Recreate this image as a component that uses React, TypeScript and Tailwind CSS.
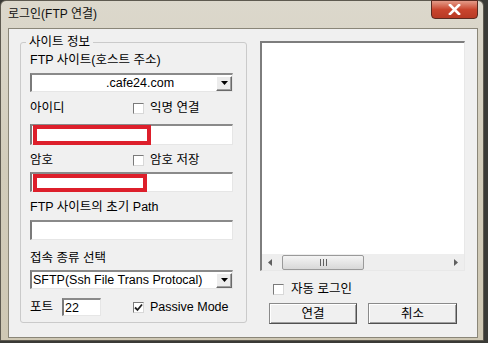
import React from "react";

const font = { fontFamily: '"Liberation Sans", "Noto Sans CJK KR", sans-serif' };

function Check({ checked = false }: { checked?: boolean }) {
  return (
    <span className="w-[11px] h-[11px] bg-white border border-t-[#7a7a7a] border-l-[#7a7a7a] border-r-[#d8d8d8] border-b-[#d8d8d8] flex items-center justify-center shrink-0">
      {checked && (
        <svg width="9" height="9" viewBox="0 0 9 9">
          <path d="M1 4.5 L3.5 7 L8 1.5" stroke="#202020" strokeWidth="1.8" fill="none" />
        </svg>
      )}
    </span>
  );
}

function DropBtn() {
  return (
    <span className="w-[16px] h-[15px] bg-[#ececec] border border-t-white border-l-white border-r-[#6a6a6a] border-b-[#6a6a6a] shadow-[inset_-1px_-1px_0_#a0a0a0] flex items-center justify-center shrink-0">
      <svg width="7" height="4" viewBox="0 0 7 4">
        <path d="M0 0 H7 L3.5 4 Z" fill="#000" />
      </svg>
    </span>
  );
}

const sunken =
  "bg-white border-t-2 border-l-2 border-b border-r border-t-[#8a8a8a] border-l-[#7a7a7a] border-b-[#e6e6e6] border-r-[#e6e6e6]";

export default function App() {
  return (
    <div
      className="w-[488px] h-[343px] overflow-hidden flex bg-[#3a3a36] text-[12.5px] text-black"
      style={font}
    >
      <div className="w-[484px] h-[341px] flex flex-col bg-gradient-to-b from-[#dcd8cc] via-[#d2ccba] to-[#cfc8b4] border border-[#5e5a50] rounded-t-[6px]">
        {/* title bar */}
        <div className="h-[27px] flex items-start relative">
          <span className="pl-[7px] pt-[6px] text-[12px] text-[#101010] leading-[14px]">로그인(FTP 연결)</span>
          <div className="absolute left-[430px] top-[-1px] w-[47px] h-[19px] rounded-b-[4px] border border-[#5a2a20] bg-gradient-to-b from-[#e39a88] via-[#c9452e] to-[#b83a24] flex items-center justify-center">
            <svg width="13" height="11" viewBox="0 0 13 11">
              <path d="M2 1 L11 10 M11 1 L2 10" stroke="#fff" strokeWidth="2.6" strokeLinecap="square" />
            </svg>
          </div>
        </div>
        {/* client */}
        <div className="ml-[7px] w-[470px] h-[310px] bg-[#f0f0f0] border border-[#8a8678] flex">
          {/* group box */}
          <div className="ml-[11px] mt-[13px] w-[227px] h-[281px] border border-[#cacaca] rounded-[3px] relative flex flex-col pl-[9px]">
            <span className="absolute left-[5px] top-[-8px] px-[3px] bg-[#f0f0f0] leading-[14px]">사이트 정보</span>
            <div className="mt-[10px] h-[14px] leading-[14px]">FTP 사이트(호스트 주소)</div>
            <div className={`mt-[6px] w-[203px] h-[19px] flex items-center justify-between ${sunken}`}>
              <span className="pl-[74px] leading-[14px]">.cafe24.com</span>
              <DropBtn />
            </div>
            <div className="mt-[9px] h-[14px] flex items-center w-[203px]">
              <span className="w-[103px]">아이디</span>
              <Check />
              <span className="ml-[6px]">익명 연결</span>
            </div>
            <div className={`mt-[9px] w-[203px] h-[21px] flex items-center ${sunken}`}>
              <div className="ml-[1px] w-[118px] h-[20px] border-[4px] border-[#dd1f2b] bg-white" />
            </div>
            <div className="mt-[8px] h-[14px] flex items-center w-[203px]">
              <span className="w-[103px]">암호</span>
              <Check />
              <span className="ml-[6px]">암호 저장</span>
            </div>
            <div className={`mt-[5px] w-[203px] h-[20px] flex items-center ${sunken}`}>
              <div className="ml-[1px] w-[114px] h-[18px] border-[4px] border-[#dd1f2b] bg-white" />
            </div>
            <div className="mt-[8px] h-[14px] leading-[14px]">FTP 사이트의 초기 Path</div>
            <div className={`mt-[6px] w-[203px] h-[20px] ${sunken}`} />
            <div className="mt-[11px] h-[14px] leading-[14px]">접속 종류 선택</div>
            <div className={`mt-[5px] w-[203px] h-[19px] flex items-center justify-between ${sunken}`}>
              <span className="pl-[1px] leading-[14px] whitespace-nowrap">SFTP(Ssh File Trans Protocal)</span>
              <DropBtn />
            </div>
            <div className="mt-[9px] h-[18px] flex items-center">
              <span className="w-[32px]">포트</span>
              <div className={`w-[39px] h-[18px] flex items-center ${sunken}`}>
                <span className="pl-[1px] leading-[14px]">22</span>
              </div>
              <span className="ml-[32px]">
                <Check checked />
              </span>
              <span className="ml-[6px]">Passive Mode</span>
            </div>
          </div>
          {/* right column */}
          <div className="ml-[13px] mt-[12px] flex flex-col">
            <div className="w-[205px] h-[230px] border-t-2 border-l-2 border-r border-b border-t-[#7d7d7d] border-l-[#7d7d7d] border-r-[#e8e8e8] border-b-[#e8e8e8] bg-white flex flex-col justify-end">
              <div className="h-[16px] bg-[#eeeeee] flex items-center">
                <span className="w-[16px] flex justify-center">
                  <svg width="4" height="7" viewBox="0 0 4 7"><path d="M4 0 V7 L0 3.5 Z" fill="#606060" /></svg>
                </span>
                <div className="ml-[4px] w-[82px] h-[15px] rounded-[2px] border border-[#9a9a9a] bg-gradient-to-b from-[#f4f4f4] to-[#d8d8d8] flex items-center justify-center">
                  <svg width="7" height="7" viewBox="0 0 7 7">
                    <path d="M0.5 0 V7 M3.5 0 V7 M6.5 0 V7" stroke="#606060" strokeWidth="1" />
                  </svg>
                </div>
                <span className="ml-auto w-[16px] flex justify-center">
                  <svg width="4" height="7" viewBox="0 0 4 7"><path d="M0 0 V7 L4 3.5 Z" fill="#606060" /></svg>
                </span>
              </div>
            </div>
            <div className="mt-[12px] ml-[13px] flex items-center h-[12px]">
              <Check />
              <span className="ml-[7px]">자동 로그인</span>
            </div>
            <div className="mt-[8px] ml-[9px] flex gap-[11px]">
              <button className="w-[88px] h-[21px] bg-[#f0f0f0] border border-t-[#8a8a8a] border-l-[#8a8a8a] border-r-[#505050] border-b-[#505050] shadow-[inset_1px_1px_0_#ffffff,inset_-1px_-1px_0_#a0a0a0] leading-[14px]">
                연결
              </button>
              <button className="w-[89px] h-[21px] bg-[#f0f0f0] border border-t-[#8a8a8a] border-l-[#8a8a8a] border-r-[#505050] border-b-[#505050] shadow-[inset_1px_1px_0_#ffffff,inset_-1px_-1px_0_#a0a0a0] leading-[14px]">
                취소
              </button>
            </div>
          </div>
        </div>
      </div>
    </div>
  );
}
